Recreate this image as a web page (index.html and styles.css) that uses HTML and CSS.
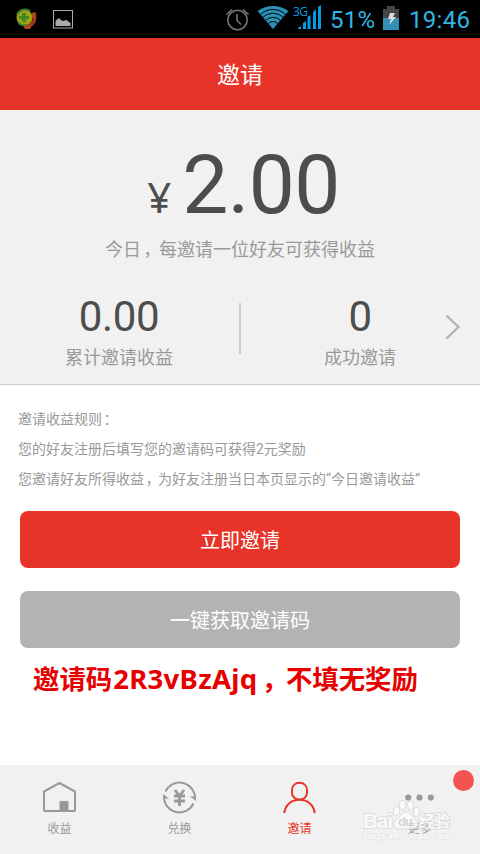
FILE: index.html
```html
<!DOCTYPE html>
<html lang="zh-CN">
<head>
    <meta charset="UTF-8">
    <meta name="viewport" content="width=device-width, initial-scale=1.0">
    <title>邀请</title>
    <link rel="stylesheet" href="styles.css">
</head>
<body>
    <!-- Status bar -->
    <div class="status-bar">
        <svg class="status-icons" width="80" height="38" viewBox="0 0 80 38">
            <circle cx="24.500" cy="17.500" r="8" fill="#a4a014"/>
            <path d="M17 15c2-5 8-7 13-4M18 22c2 3 6 4 9 3" fill="none" stroke="#3d8134" stroke-width="2"/>
            <path d="M22 13h4v3h3v3h-3v3h-4v-3h-3v-3h3z" fill="#3f8a20"/>
            <path d="M34.500 15c1 6-2 10-8 12" fill="none" stroke="#963b16" stroke-width="3.500" stroke-linecap="round"/>
            <path d="M34 14v3M26 27h3" stroke="#ab4a20" stroke-width="4" stroke-linecap="round"/>
            <rect x="53.500" y="10.500" width="19" height="17.500" fill="none" stroke="#aaa"/>
            <path d="M55.500 26v-5l3-3 4 3 4-1 4 3v3z" fill="#aaa"/>
        </svg>
        <svg class="status-icons" width="104" height="38" viewBox="222 0 104 38">
            <g fill="none" stroke="#777" stroke-width="1.600">
                <circle cx="237.500" cy="20" r="9.700"/>
                <path d="M237 14v6.500l4 4M226.500 14.500l5.500-5M243 9.500l5.500 5"/>
            </g>
            <clipPath id="wifi"><path d="M273 29L257.500 11Q273 1 288.500 11z"/></clipPath>
            <g clip-path="url(#wifi)">
                <rect x="257" y="5" width="32" height="25" fill="#2a91b9"/>
                <g fill="none" stroke="#000" stroke-width="1">
                    <circle cx="273" cy="28" r="6.500"/>
                    <circle cx="273" cy="28" r="10.700"/>
                    <circle cx="273" cy="28" r="14.800"/>
                    <circle cx="273" cy="28" r="18.500"/>
                </g>
            </g>
            <path d="M298 29v-1l3-2v3zM303 29v-6l3-2v8zM307.500 29V17l3-2v14zM313 29V12l3-3v20zM318 29V7l3-2v24z" fill="#069be3"/>
            <text class="network" x="293" y="16" textLength="15">3G</text>
        </svg>
        <span class="battery-text">51%</span>
        <svg class="battery" width="16" height="38" viewBox="383 0 16 38">
            <path d="M383 9h4V6h8v3h4v9h-16z" fill="#454545"/>
            <path d="M383 18h16v12h-16z" fill="#338fb5"/>
            <path d="M390 13h5l-2 4h3l-7 8 2-6h-3z" fill="#ddd"/>
        </svg>
        <span class="clock">19:46</span>
    </div>

    <h1 class="title">邀请</h1>

    <!-- Income summary -->
    <div class="summary">
        <div class="amount"><span class="currency">¥</span><span class="value">2.00</span></div>
        <p class="subtitle">今日<span class="punct">，</span>每邀请一位好友可获得收益</p>
        <div class="stats">
            <div class="stat">
                <div class="stat-value">0.00</div>
                <div class="stat-label">累计邀请收益</div>
            </div>
            <div class="divider"></div>
            <div class="stat">
                <div class="stat-value">0</div>
                <div class="stat-label">成功邀请</div>
            </div>
            <svg class="arrow" width="16" height="26" viewBox="0 0 16 26">
                <path d="M1.500 1.500L13.500 13L1.500 24.500" fill="none" stroke="#b0b0b0" stroke-width="2.200"/>
            </svg>
        </div>
    </div>

    <!-- Rules and actions -->
    <div class="content">
        <div class="rules">
            <p>邀请收益规则<span class="punct">：</span></p>
            <p>您的好友注册后填写您的邀请码可获得2元奖励</p>
            <p>您邀请好友所得收益<span class="punct">，</span>为好友注册当日本页显示的“今日邀请收益”</p>
        </div>
        <button class="btn btn-primary">立即邀请</button>
        <button class="btn btn-code">一键获取邀请码</button>
        <p class="notice">邀请码<span class="code">2R3vBzAjq</span><span class="punct">，</span>不填无奖励</p>
    </div>

    <!-- Bottom tabs -->
    <div class="tabs">
        <div class="tab">
            <svg width="36" height="36" viewBox="42 780 36 36">
                <path d="M44 791.500L59.500 783L75 791.500V810q0 1-1 1H45q-1 0-1-1z" fill="none" stroke="#999" stroke-width="2" stroke-linejoin="round"/>
                <path d="M59.500 801h9v10h-9z" fill="#999"/>
            </svg>
            <span>收益</span>
        </div>
        <div class="tab">
            <svg width="36" height="36" viewBox="162 780 36 36">
                <path d="M165.500 791.500A15.500 15.500 0 0 1 195 798.500M193.500 803.500A15.500 15.500 0 0 1 164 796.500" fill="none" stroke="#999" stroke-width="2"/>
                <path d="M163 794l6 4.500h-6zM196 801l-6-4.500h6z" fill="#999"/>
                <path d="M175 790l4.500 6 4.500-6M174 796h11M174 801h11M179.500 796v10" fill="none" stroke="#999" stroke-width="2.800"/>
            </svg>
            <span>兑换</span>
        </div>
        <div class="tab active">
            <svg width="36" height="36" viewBox="282 780 36 36">
                <path d="M299.500 782.800C295 782.800 292 786 292 790.500V793C292 797 295.500 799.500 299.500 799.500S307 797 307 793V790.500C307 786 304 782.800 299.500 782.800zM284.200 813C285.500 804.500 291.500 799.700 299.500 799.700S313.500 804.500 314.800 813" fill="none" stroke="#e83428" stroke-width="2"/>
            </svg>
            <span>邀请</span>
        </div>
        <div class="tab">
            <svg width="36" height="36" viewBox="402 780 36 36">
                <g fill="#999">
                    <circle cx="408.200" cy="797.500" r="3.100"/>
                    <circle cx="419.500" cy="797.500" r="3.100"/>
                    <circle cx="430.800" cy="797.500" r="3.100"/>
                </g>
            </svg>
            <span>更多</span>
        </div>
        <div class="badge"></div>
        <svg class="watermark" width="94" height="46" viewBox="360 798 94 46">
            <g fill="#fff" stroke="#d0d0d0" stroke-width="1">
                <ellipse cx="396.500" cy="811" rx="3" ry="4.500"/>
                <ellipse cx="402.500" cy="805" rx="3" ry="4.500"/>
                <ellipse cx="410.500" cy="805.500" rx="3" ry="4.500"/>
                <ellipse cx="416.500" cy="812" rx="3" ry="4.500"/>
                <path d="M406 812c4 0 6 5 10 8 4 4 2 9-3 9h-14c-5 0-7-5-3-9 4-3 6-8 10-8z"/>
                <text class="mark-name" x="363" y="828" textLength="30">Bai</text>
                <text class="mark-name mark-cn" x="419" y="827" textLength="31">经验</text>
                <text class="mark-url" x="363" y="839" textLength="88">jingyan.baidu.com</text>
            </g>
            <text class="mark-du" x="398" y="826" textLength="15">du</text>
        </svg>
    </div>
</body>
</html>
```
FILE: styles.css
```css
* {
    box-sizing: border-box;
}
body {
    margin: 0;
    width: 480px;
    height: 854px;
    display: flex;
    flex-direction: column;
    overflow: hidden;
    background: #fff;
    font-family: Roboto, "Noto Sans CJK SC", sans-serif;
    color: #999;
}
p {
    margin: 0;
}
svg {
    display: block;
    flex-shrink: 0;
}
.status-bar {
    display: flex;
    height: 38px;
    background: #000;
    color: #33b5e5;
    font-size: 24px;
    line-height: 40px;
}
.status-icons + .status-icons {
    margin-left: 142px;
}
.network {
    font: 12px "Open Sans", sans-serif;
    fill: #069be3;
}
.battery-text {
    width: 57px;
    padding-left: 4px;
    letter-spacing: 0.3px;
}
.clock {
    padding-left: 10px;
    letter-spacing: 0.3px;
}
.title {
    margin: 0;
    height: 72px;
    padding-top: 3px;
    background: #e83428;
    color: #fff;
    font-size: 23px;
    font-weight: 400;
    line-height: 70px;
    text-align: center;
}
.summary {
    height: 275px;
    padding-top: 27px;
    background: #f1f1f1;
    border-bottom: 1px solid #ccc;
}
.amount {
    display: flex;
    justify-content: center;
    align-items: baseline;
    gap: 11px;
    height: 96px;
    padding-left: 7px;
    line-height: 96px;
    color: #4d4d4d;
}
.currency {
    font-family: "Noto Sans", sans-serif;
    font-size: 42px;
    line-height: 60px;
}
.value {
    font-size: 82px;
    letter-spacing: -0.6px;
}
.subtitle {
    height: 32px;
    font-size: 18px;
    line-height: 34px;
    text-align: center;
}
/* full-width cell with the mark in the middle */
.punct {
    display: inline-block;
    width: 1em;
    text-align: left;
    text-indent: 0.12em;
    white-space: nowrap;
}
.stats {
    display: flex;
    position: relative;
    margin-top: 28px;
}
.stat {
    flex: 1;
    padding-right: 1px;
    text-align: center;
}
.stat-value {
    height: 48px;
    color: #4d4d4d;
    font-size: 42px;
    line-height: 48px;
    letter-spacing: -0.4px;
}
.stat-label {
    font-size: 18px;
    line-height: 34px;
}
.divider {
    width: 2px;
    height: 51px;
    margin-top: 10px;
    background: #ccc;
}
.arrow {
    position: absolute;
    right: 19px;
    top: 21px;
}
.content {
    flex: 1;
    padding: 19px 20px 0;
}
.rules {
    margin: 0 -2px 17px;
    font-size: 14px;
    line-height: 30px;
    white-space: nowrap;
}
.stats + .rules {
    margin-top: 0;
}
.btn {
    display: block;
    width: 440px;
    height: 57px;
    margin-bottom: 23px;
    padding: 3px 0 0;
    border: none;
    border-radius: 8px;
    color: #fff;
    font-family: inherit;
    font-size: 20px;
    line-height: 54px;
}
.btn-primary {
    background: #e83428;
}
.btn-code {
    background: #b3b3b3;
    margin-bottom: 11px;
}
.notice {
    padding-left: 13px;
    color: #e60000;
    font-size: 26.4px;
    font-weight: 700;
    line-height: 40px;
    white-space: nowrap;
}
.notice .punct {
    text-indent: 0.08em;
}
.code {
    margin: 0 2px 0 1px;
    font-family: "Noto Sans", sans-serif;
    font-size: 27.5px;
    letter-spacing: 0.3px;
}
.tabs {
    display: flex;
    position: relative;
    height: 89px;
    background: #f1f1f1;
}
.tab {
    width: 120px;
    padding: 15px 1px 0 0;
    display: flex;
    flex-direction: column;
    align-items: center;
    font-size: 12px;
    line-height: 26px;
}
.active {
    color: #e83428;
}
.badge {
    position: absolute;
    left: 453px;
    top: 5px;
    width: 21px;
    height: 21px;
    border-radius: 50%;
    background: #f55252;
}
.watermark {
    position: absolute;
    left: 360px;
    top: 33px;
    opacity: 0.7;
}
.mark-name {
    font: 700 21px "Liberation Sans", sans-serif;
    paint-order: stroke;
    stroke-width: 1.6px;
}
.mark-cn {
    font: 700 16px "Noto Sans CJK SC", sans-serif;
}
.mark-url {
    font: 700 10px "Liberation Serif", serif;
    paint-order: stroke;
    stroke: #ddd;
}
.mark-du {
    font: 700 13px "Liberation Sans", sans-serif;
    fill: #c8c8c8;
}
```
